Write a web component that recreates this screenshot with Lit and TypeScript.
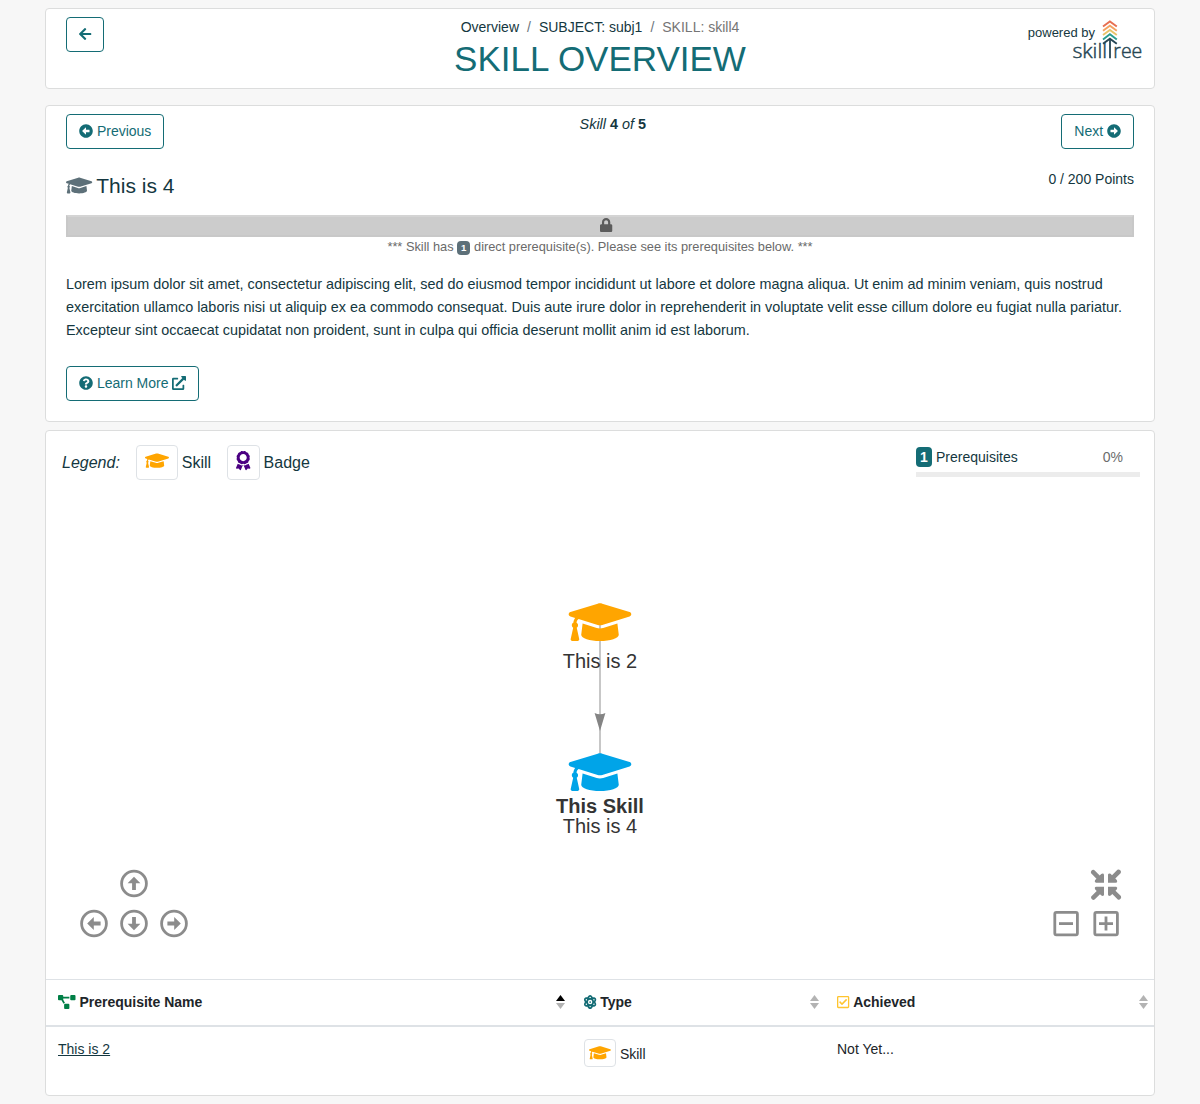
import { LitElement, html, svg, css } from "lit";
import { customElement, property } from "lit/decorators.js";

const CAP = "M622.34 153.2L343.4 67.5c-15.2-4.67-31.6-4.67-46.79 0L17.66 153.2c-23.54 7.23-23.54 38.36 0 45.59l48.63 14.94c-10.67 13.19-17.23 29.28-17.88 46.9C38.78 266.15 32 276.11 32 288c0 10.78 5.68 19.85 13.86 25.65L20.33 428.53C18.11 438.52 25.71 448 35.94 448h56.11c10.24 0 17.84-9.48 15.62-19.47L82.14 313.65C90.32 307.85 96 298.78 96 288c0-11.57-6.47-21.25-15.66-26.87.76-15.02 8.44-28.3 20.69-36.72L296.6 284.5c9.06 2.78 26.44 6.25 46.79 0l278.95-85.7c23.55-7.24 23.55-38.36 0-45.6zM352.79 315.09c-28.53 8.76-52.84 3.92-65.59 0l-145.02-44.55L128 384c0 35.35 85.96 64 192 64s192-28.65 192-64l-14.18-113.47-145.03 44.56z";

const ICONS: Record<string, [number, string]> = {
  cap: [640, CAP],
  back: [448, "M257.5 445.1l-22.2 22.2c-9.4 9.4-24.6 9.4-33.9 0L7 273c-9.4-9.4-9.4-24.6 0-33.9L201.4 44.7c9.4-9.4 24.6-9.4 33.9 0l22.2 22.2c9.5 9.5 9.3 25-.4 34.3L136.6 216H424c13.3 0 24 10.7 24 24v32c0 13.3-10.7 24-24 24H136.6l120.5 114.8c9.8 9.3 10 24.8.4 34.3z"],
  circleLeft: [512, "M256 504C119 504 8 393 8 256S119 8 256 8s248 111 248 248-111 248-248 248zm116-292H256v-70.9c0-10.7-13-16.1-20.5-8.5L121.2 247.5c-4.7 4.7-4.7 12.2 0 16.9l114.3 114.9c7.6 7.6 20.5 2.2 20.5-8.5V300h116c6.6 0 12-5.4 12-12v-64c0-6.6-5.4-12-12-12z"],
  circleRight: [512, "M256 8c137 0 248 111 248 248S393 504 256 504 8 393 8 256 119 8 256 8zM140 300h116v70.9c0 10.7 13 16.1 20.5 8.5l114.3-114.9c4.7-4.7 4.7-12.2 0-16.9l-114.3-115c-7.6-7.6-20.5-2.2-20.5 8.5V212H140c-6.6 0-12 5.4-12 12v64c0 6.6 5.4 12 12 12z"],
  question: [512, "M504 256c0 136.997-111.043 248-248 248S8 392.997 8 256C8 119.083 119.043 8 256 8s248 111.083 248 248zM262.655 90c-54.497 0-89.255 22.957-116.549 63.758-3.536 5.286-2.353 12.415 2.715 16.258l34.699 26.31c5.205 3.947 12.621 3.008 16.665-2.122 17.864-22.658 30.113-35.797 57.303-35.797 20.429 0 45.698 13.148 45.698 32.958 0 14.976-12.363 22.667-32.534 33.976C247.128 238.528 216 254.941 216 296v4c0 6.627 5.373 12 12 12h56c6.627 0 12-5.373 12-12v-1.333c0-28.462 83.186-29.647 83.186-106.667 0-58.002-60.165-102-116.531-102zM256 338c-25.365 0-46 20.635-46 46 0 25.364 20.635 46 46 46s46-20.636 46-46c0-25.365-20.635-46-46-46z"],
  external: [512, "M432,320H400a16,16,0,0,0-16,16V448H64V128H208a16,16,0,0,0,16-16V80a16,16,0,0,0-16-16H48A48,48,0,0,0,0,112V464a48,48,0,0,0,48,48H400a48,48,0,0,0,48-48V336A16,16,0,0,0,432,320ZM488,0h-128c-21.37,0-32.05,25.91-17,41l35.73,35.73L135,320.37a24,24,0,0,0,0,34L157.67,377a24,24,0,0,0,34,0L435.28,133.32,471,169c15,15,41,4.5,41-17V24A24,24,0,0,0,488,0Z"],
  award: [384, "M97.12 362.63c-8.69-8.69-4.16-6.24-25.12-11.85-9.51-2.55-17.87-7.45-25.43-13.32L1.2 448.7c-4.39 10.77 3.81 22.47 15.43 22.03l52.69-2.01L105.56 507c8 8.44 22.04 5.81 26.43-4.96l52.05-127.62c-10.84 6.04-22.87 9.58-35.31 9.58-19.5 0-37.82-7.59-51.61-21.37zM382.8 448.7l-45.37-111.24c-7.56 5.88-15.92 10.77-25.43 13.32-21.07 5.64-16.45 3.18-25.12 11.85-13.79 13.78-32.12 21.37-51.62 21.37-12.44 0-24.47-3.55-35.31-9.58L252 502.04c4.39 10.77 18.44 13.4 26.43 4.96l36.25-38.28 52.69 2.01c11.62.44 19.82-11.27 15.43-22.03zM263 340c15.28-15.55 17.03-14.21 38.79-20.14 13.89-3.79 24.75-14.84 28.47-28.98 7.48-28.4 5.54-24.97 25.95-45.75 10.17-10.35 14.14-25.44 10.42-39.58-7.47-28.38-7.48-24.42 0-52.83 3.72-14.14-.25-29.23-10.42-39.58-20.41-20.78-18.47-17.36-25.95-45.75-3.72-14.14-14.58-25.19-28.47-28.98-27.88-7.61-24.52-5.62-44.95-26.41-10.17-10.35-25-14.4-38.89-10.61-27.87 7.6-23.98 7.61-51.9 0-13.89-3.79-28.72.25-38.89 10.61-20.41 20.78-17.05 18.8-44.94 26.41-13.89 3.79-24.75 14.84-28.47 28.98-7.47 28.39-5.54 24.97-25.95 45.75-10.17 10.35-14.15 25.44-10.42 39.58 7.47 28.36 7.48 24.4 0 52.82-3.72 14.14.25 29.23 10.42 39.59 20.41 20.78 18.47 17.35 25.95 45.75 3.72 14.14 14.58 25.19 28.47 28.98C104.6 325.96 106.27 325 121 340c13.23 13.47 33.84 15.88 49.74 5.82a39.676 39.676 0 0 1 42.53 0c15.89 10.06 36.5 7.65 49.73-5.82zM97.66 175.96c0-53.03 42.24-96.02 94.34-96.02s94.34 42.99 94.34 96.02-42.24 96.02-94.34 96.02-94.34-42.99-94.34-96.02z"],
  lock: [448, "M400 224h-24v-72C376 68.2 307.8 0 224 0S72 68.2 72 152v72H48c-26.5 0-48 21.5-48 48v192c0 26.5 21.5 48 48 48h352c26.5 0 48-21.5 48-48V272c0-26.5-21.5-48-48-48zm-104 0H152v-72c0-39.7 32.3-72 72-72s72 32.3 72 72v72z"],
  diagram: [640, "M384 320H256c-17.67 0-32 14.33-32 32v128c0 17.67 14.33 32 32 32h128c17.67 0 32-14.33 32-32V352c0-17.67-14.33-32-32-32zM192 32c0-17.67-14.33-32-32-32H32C14.33 0 0 14.33 0 32v128c0 17.67 14.33 32 32 32h95.72l73.16 128.04C211.98 300.98 232.4 288 256 288h.28L192 175.51V128h224V64H192V32zM608 0H480c-17.67 0-32 14.33-32 32v128c0 17.67 14.33 32 32 32h128c17.67 0 32-14.33 32-32V32c0-17.67-14.33-32-32-32z"],
  check: [448, "M400 32H48C21.49 32 0 53.49 0 80v352c0 26.51 21.49 48 48 48h352c26.51 0 48-21.49 48-48V80c0-26.51-21.49-48-48-48zm0 400H48V80h352v352zm-35.864-241.724L191.547 361.48c-4.705 4.667-12.303 4.637-16.97-.068l-90.781-91.516c-4.667-4.705-4.637-12.303.069-16.971l22.719-22.536c4.705-4.667 12.303-4.637 16.97.069l59.792 60.277 141.352-140.216c4.705-4.667 12.303-4.637 16.97.068l22.536 22.718c4.667 4.706 4.637 12.304-.068 16.971z"],
  atom: [448, "M223.999,224a32,32,0,1,0,32.008,32A32.064,32.064,0,0,0,223.999,224Zm214.172-96c-10.877-19.5-40.51-50.75-116.275-41.875C300.392,34.875,267.634,0,223.999,0s-76.391,34.875-97.897,86.125C50.337,77.375,20.706,108.5,9.829,128-6.55,157.375-5.175,201.125,34.958,256-5.175,310.875-6.55,354.625,9.829,384c29.131,52.375,101.647,43.625,116.273,41.875C147.608,477.125,180.364,512,223.999,512s76.393-34.875,97.897-86.125c14.629,1.75,87.145,10.5,116.275-41.875C454.55,354.625,453.175,310.875,413.04,256,453.175,201.125,454.55,157.375,438.171,128ZM63.339,352c-4-7.25-.125-24.75,15.004-48.25,6.877,6.5,14.129,12.875,21.881,19.125,1.627,13.75,4.002,27.125,6.752,40.125C82.345,363.875,67.091,358.625,63.339,352Zm36.885-162.875c-7.752,6.25-15.004,12.625-21.881,19.125-15.129-23.5-19.004-41-15.004-48.25,3.377-6.125,16.379-11.5,37.885-11.5,1.75,0,3.875.375,5.75.375C104.099,162.25,101.849,175.625,100.224,189.125ZM223.999,64c9.502,0,22.256,13.5,33.883,37.25-11.252,3.75-22.504,8-33.883,12.875-11.377-4.875-22.629-9.125-33.883-12.875C201.745,77.5,214.497,64,223.999,64Zm0,384c-9.502,0-22.254-13.5-33.883-37.25,11.254-3.75,22.506-8,33.883-12.875C235.378,402.75,246.63,407,257.882,410.75,246.255,434.5,233.501,448,223.999,448Zm0-112a80,80,0,1,1,80-80A80,80,0,0,1,223.999,336ZM384.659,352c-3.625,6.625-19.004,11.875-43.635,11,2.752-13,5.127-26.375,6.752-40.125,7.752-6.25,15.004-12.625,21.879-19.125C384.784,327.25,388.659,344.75,384.659,352ZM369.655,208.25c-6.875-6.5-14.127-12.875-21.879-19.125-1.625-13.5-3.875-26.875-6.752-40.25,1.875,0,4.002-.375,5.752-.375,21.504,0,34.508,5.375,37.883,11.5C388.659,167.25,384.784,184.75,369.655,208.25Z"],
};

@customElement("fa-icon")
class FaIcon extends LitElement {
  @property() name = "cap";
  static styles = css`
    :host { display: inline-block; line-height: 1; height: 1em; vertical-align: -0.125em; }
    svg { display: block; height: 1em; width: auto; fill: currentColor; overflow: visible; }
  `;
  render() {
    const [w, d] = ICONS[this.name];
    return html`<svg viewBox="0 0 ${w} 512"><path d=${d}></path></svg>`;
  }
}

@customElement("skilltree-logo")
class SkilltreeLogo extends LitElement {
  static styles = css`
    :host { display: block; width: 70px; height: 42px; }
    svg { display: block; overflow: visible; }
    .word { font: 300 19.5px "Open Sans", sans-serif; fill: #264653; stroke: #264653; stroke-width: 0.45; }
    .chevron { fill: none; stroke-width: 1.9; }
  `;
  render() {
    const rows: [number, string][] = [[2, "#e76f51"], [6.3, "#f4a261"], [10.6, "#e9c46a"], [14.9, "#2a9d8f"], [19.3, "#264653"]];
    return html`<svg width="70" height="42" viewBox="0 0 70 42">
      ${rows.map(([y, c]) => svg`<path class="chevron" stroke=${c} d="M31 ${y + 4.5}L37.9 ${y - 0.6}L44.8 ${y + 4.5}"></path>`)}
      <path d="M38 19V38.2" stroke="#264653" stroke-width="1.8"></path>
      <text class="word" x="0.4" y="38" textLength="34.6" lengthAdjust="spacingAndGlyphs">skill</text>
      <text class="word" x="41.3" y="38" textLength="29" lengthAdjust="spacingAndGlyphs">ree</text>
    </svg>`;
  }
}

@customElement("skill-graph")
class SkillGraph extends LitElement {
  static styles = css`
    :host { display: block; }
    svg { display: block; }
    text { font: 20px "Liberation Sans", Arial, sans-serif; fill: #343434; text-anchor: middle; }
    .strong { font-weight: 700; }
    .ctl { fill: none; stroke: #8c8c8c; stroke-width: 2.8; }
    .solid { fill: #8c8c8c; }
  `;
  private pan(x: number, y: number, angle: number) {
    return svg`<g transform="translate(${x} ${y}) rotate(${angle})">
      <circle class="ctl" r="12.4"></circle>
      <path class="solid" d="M0 -6.8L6.4 -0.2H1.9V6.6H-1.9V-0.2H-6.4Z"></path>
    </g>`;
  }
  render() {
    return html`<svg width="1108" height="492" viewBox="46 487 1108 492">
      <path d="M600 622V772" stroke="#b9b9b9" stroke-width="1.6"></path>
      <path d="M600 731L594.6 713Q600 715.5 605.4 713Z" fill="#848484"></path>
      <g fill="#ffa500" transform="translate(568.7 597.1) scale(0.0978)"><path d=${CAP}></path></g>
      <g fill="#00a4e8" transform="translate(568.7 747.1) scale(0.0978)"><path d=${CAP}></path></g>
      <text x="600" y="668">This is 2</text>
      <text class="strong" x="600" y="813">This Skill</text>
      <text x="600" y="833">This is 4</text>
      ${this.pan(134, 883.5, 0)}${this.pan(94, 923.5, -90)}${this.pan(134, 923.5, 180)}${this.pan(174, 923.5, 90)}
      ${[0, 90, 180, 270].map((a) => svg`<g transform="translate(1106 884.7) rotate(${a})">
        <path class="solid" d="M-2 -2H-10.2Q-12 -2.8 -10.9 -4.6L-9.5 -6L-14.9 -11.4Q-15.6 -12.9 -14.6 -14Q-13.3 -15.5 -11.8 -14.8L-6.3 -9.3L-4.8 -10.8Q-2.2 -11.9 -2 -9.8Z"></path></g>`)}
      <rect class="ctl" x="1054.8" y="912.4" width="22.6" height="22.4" rx="1.5"></rect>
      <path class="ctl" d="M1059 923.6H1073"></path>
      <rect class="ctl" x="1094.8" y="912.4" width="22.6" height="22.4" rx="1.5"></rect>
      <path class="ctl" d="M1099 923.6H1113M1106 916.6V930.6"></path>
    </svg>`;
  }
}

@customElement("app-root")
class AppRoot extends LitElement {
  static styles = css`
    :host { display: block; box-sizing: border-box; height: 1104px; padding: 8px 45px; background: #f7f7f7;
      font: 14.4px/1.5 "Liberation Sans", Arial, sans-serif; color: #143740; }
    * { box-sizing: border-box; }
    .card { background: #fff; border: 1px solid #dcdddd; border-radius: 4px; }
    .top { height: 81px; display: grid; grid-template-columns: 1fr auto 1fr; padding: 8px 20px 0; }
    .btn { display: inline-flex; align-items: center; gap: 3.89px; height: 35px; padding: 0 12px; border: 1px solid #146c75;
      border-radius: 4px; color: #146c75; background: #fff; font: 14px/21px "Liberation Sans", Arial, sans-serif; }
    .btn fa-icon { margin-bottom: 1px; }
    .middle { text-align: center; }
    .crumbs { display: flex; justify-content: center; gap: 8px; line-height: 21px; height: 21px; font-size: 14px; color: #6c757d; }
    .crumbs a { color: #143740; }
    .crumbs .here { color: #757575; }
    h1 { margin: 0; font-weight: 400; font-size: 35px; line-height: 42px; color: #146c75; white-space: nowrap; }
    .brand { display: flex; justify-content: flex-end; position: relative; font-size: 13px; line-height: 20px; padding: 6px 39px 0 0; }
    .brand skilltree-logo { position: absolute; right: -8px; top: 3px; }
    .skill { height: 317px; margin-top: 16px; padding: 8px 20px 0; }
    .nav { display: flex; justify-content: space-between; align-items: flex-start; height: 55px; }
    .count { line-height: 21px; }
    .head { display: flex; justify-content: space-between; height: 46px; font-size: 14px; line-height: 21px; }
    .title { display: flex; align-items: center; gap: 4px; height: 32px; font-size: 21px; }
    .title fa-icon { color: #5d7079; }
    .locked { display: flex; justify-content: center; align-items: center; height: 22px; padding: 0 0 2px 12px; background: #ccc; border: 2px solid #c8c8c8; border-top-color: #d4d4d4; color: #5c5c5c; font-size: 14px; }
    .note { text-align: center; font-size: 12.8px; line-height: 20px; height: 20px; color: #6a6a6a; }
    .chip { display: inline-block; background: #5d7079; color: #fff; border-radius: 4px; font-weight: 700; font-size: 9.6px; line-height: 10px; padding: 2px 4px; }
    .desc { margin: 16px 0 24px; line-height: 23px; font-size: 14.4px; }
    .graph { margin-top: 8px; height: 666px; overflow: hidden; }
    .bar { display: flex; justify-content: space-between; height: 56px; padding: 14px 14px 0 16px; font-size: 16px; }
    .legend { display: flex; height: 35px; align-items: center; }
    .tile { display: inline-flex; align-items: center; justify-content: center; height: 35px; border: 1px solid #dee2e6; border-radius: 4px; background: #fff; margin: 0 4px 0 16px; padding: 0 8px 3px; font-size: 19.2px; color: #ffa500; }
    .tile.badge { color: #4b0082; }
    .progress { width: 224px; padding-top: 1.5px; font-size: 14px; line-height: 21px; }
    .row { display: flex; align-items: center; }
    .num { height: 20px; width: 16px; margin-right: 4px; border-radius: 4px; background: #146c75; color: #fff; font-weight: 700; text-align: center; line-height: 20px; font-size: 14px; }
    .pct { margin-left: auto; margin-right: 17px; color: #6c6c6c; }
    .track { height: 5px; margin-top: 4px; background: #ececec; }
    .table { border-top: 1px solid #dee2e6; display: grid; grid-template-columns: 526px 253px 329px; font-size: 14px; color: #212529; }
    .th { display: flex; align-items: center; gap: 3.89px; height: 47px; padding: 0 6px 0 12px; border-bottom: 2px solid #dee2e6; font-weight: 700; }
    .th:first-child { padding-right: 7px; }
    .th fa-icon, .th svg { margin-bottom: 1px; }
    .th svg { margin-left: auto; }
    .td { height: 68px; padding: 12px; line-height: 21px; }
    .td a { color: #143740; text-decoration: underline; }
    .type { display: flex; align-items: center; height: 28px; }
    .type span:last-child { padding-top: 2px; }
    .type .tile { height: 28px; font-size: 17.5px; padding: 0 4px 1px; margin: 0 4px 0 0; }
    .green { color: #007f46; } .teal { color: #146c75; } .yellow { color: #ffc42e; }
  `;
  private sorter(up: string) {
    return html`<svg width="9" height="14" viewBox="0 0 9 14"><path d="M0 6L4.5 0L9 6Z" fill=${up}></path><path d="M0 8L4.5 14L9 8Z" fill="#b3b3b3"></path></svg>`;
  }
  render() {
    return html`
      <header class="card top">
        <div><span class="btn"><fa-icon name="back"></fa-icon></span></div>
        <div class="middle">
          <nav class="crumbs"><a>Overview</a><span>/</span><a>SUBJECT: subj1</a><span>/</span><span class="here">SKILL: skill4</span></nav>
          <h1>SKILL OVERVIEW</h1>
        </div>
        <div class="brand"><span>powered by</span><skilltree-logo></skilltree-logo></div>
      </header>
      <section class="card skill">
        <div class="nav">
          <span class="btn"><fa-icon name="circleLeft"></fa-icon>Previous</span>
          <span class="count"><i>Skill</i> <b>4</b> <i>of</i> <b>5</b></span>
          <span class="btn">Next<fa-icon name="circleRight"></fa-icon></span>
        </div>
        <div class="head"><div class="title"><fa-icon name="cap"></fa-icon>This is 4</div><span>0 / 200 Points</span></div>
        <div class="locked"><fa-icon name="lock"></fa-icon></div>
        <div class="note">*** Skill has <span class="chip">1</span> direct prerequisite(s). Please see its prerequisites below. ***</div>
        <p class="desc">Lorem ipsum dolor sit amet, consectetur adipiscing elit, sed do eiusmod tempor incididunt ut labore et dolore magna aliqua. Ut enim ad minim veniam, quis nostrud exercitation ullamco laboris nisi ut aliquip ex ea commodo consequat. Duis aute irure dolor in reprehenderit in voluptate velit esse cillum dolore eu fugiat nulla pariatur. Excepteur sint occaecat cupidatat non proident, sunt in culpa qui officia deserunt mollit anim id est laborum.</p>
        <span class="btn"><fa-icon name="question"></fa-icon>Learn More<fa-icon name="external"></fa-icon></span>
      </section>
      <section class="card graph">
        <div class="bar">
          <div class="legend"><i>Legend:</i><span class="tile"><fa-icon name="cap"></fa-icon></span>Skill<span class="tile badge"><fa-icon name="award"></fa-icon></span>Badge</div>
          <div class="progress">
            <div class="row"><span class="num">1</span>Prerequisites<span class="pct">0%</span></div>
            <div class="track"></div>
          </div>
        </div>
        <skill-graph></skill-graph>
        <div class="table">
          <div class="th"><fa-icon class="green" name="diagram"></fa-icon>Prerequisite Name${this.sorter("#000")}</div>
          <div class="th"><fa-icon class="teal" name="atom"></fa-icon>Type${this.sorter("#b3b3b3")}</div>
          <div class="th"><fa-icon class="yellow" name="check"></fa-icon>Achieved${this.sorter("#b3b3b3")}</div>
          <div class="td"><a>This is 2</a></div>
          <div class="td"><div class="type"><span class="tile"><fa-icon name="cap"></fa-icon></span><span>Skill</span></div></div>
          <div class="td">Not Yet...</div>
        </div>
      </section>`;
  }
}
